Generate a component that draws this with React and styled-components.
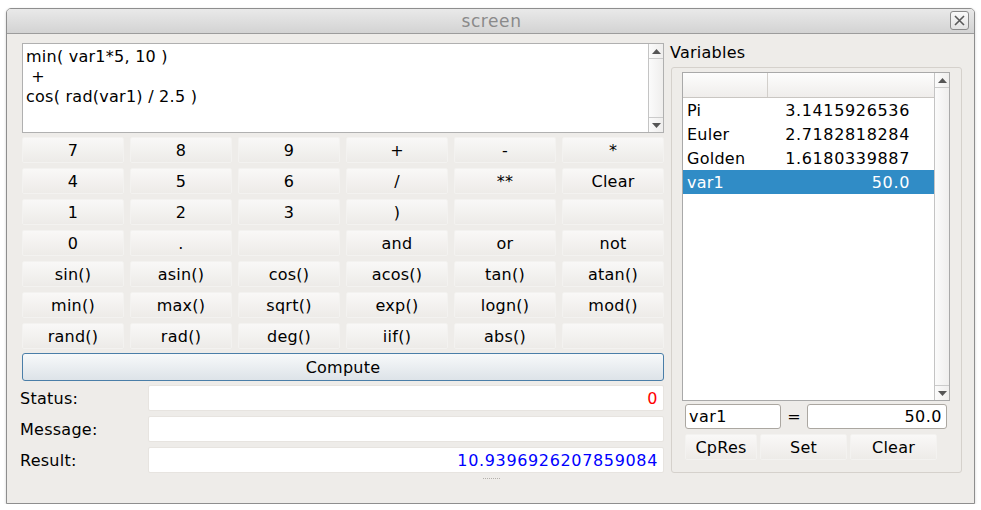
import styled, { createGlobalStyle } from 'styled-components';

const GlobalStyle = createGlobalStyle`
  html, body {
    margin: 0;
    padding: 0;
    background: #ffffff;
  }
  body {
    font-family: 'DejaVu Sans', 'Noto Sans', sans-serif;
    font-size: 16px;
    letter-spacing: 0.25px;
    color: #000000;
  }
`;

const Window = styled.div`
  margin: 8px 0 0 6px;
  width: 967px;
  height: 494px;
  border: 1px solid #8e8e8e;
  border-radius: 5px 5px 0 0;
  background: #eeece9;
  box-shadow: 0 1px 3px rgba(0, 0, 0, 0.18);
  display: flex;
  flex-direction: column;
  overflow: hidden;
`;

const TitleBar = styled.div`
  position: relative;
  height: 24px;
  flex: none;
  border-bottom: 1px solid #9c9c9c;
  background: linear-gradient(#e9e9e9, #d3d3d3);
  display: flex;
  align-items: center;
  justify-content: center;
`;

const Title = styled.span`
  font-size: 17px;
  letter-spacing: 0.6px;
  color: #8a8a8a;
  margin-left: 2px;
`;

const CloseButton = styled.div`
  position: absolute;
  right: 5px;
  top: 2px;
  width: 17px;
  height: 17px;
  border: 1px solid #8a8a8a;
  border-radius: 3px;
  background: linear-gradient(#fafafa, #e2e2e2);
  display: flex;
  align-items: center;
  justify-content: center;
`;

const Client = styled.div`
  flex: 1;
  display: flex;
  flex-direction: column;
  padding: 9px 11px 0 13px;
`;

const Main = styled.div`
  display: flex;
  gap: 6px;
`;

const LeftColumn = styled.div`
  width: 644px;
  display: flex;
  flex-direction: column;
`;

const Editor = styled.div`
  margin-left: 2px;
  height: 88px;
  border: 1px solid #b0b0b0;
  background: #ffffff;
  display: flex;
`;

const EditorText = styled.div`
  flex: 1;
  padding: 3px 3px;
  line-height: 20px;
  white-space: pre;
`;

const ScrollBar = styled.div`
  width: 14px;
  border-left: 1px solid #c4c4c4;
  background: linear-gradient(90deg, #fbfbfb, #efeeed);
  display: flex;
  flex-direction: column;
  justify-content: space-between;
`;

const ArrowBox = styled.div`
  height: 14px;
  display: flex;
  align-items: center;
  justify-content: center;
  border-${(p) => (p.$down ? 'top' : 'bottom')}: 1px solid #cbcbcb;
`;

const Keypad = styled.div`
  margin: 4px 0 0 2px;
  display: grid;
  grid-template-columns: repeat(6, 1fr);
  grid-auto-rows: 26px;
  column-gap: 6px;
  row-gap: 5px;
`;

const Key = styled.div`
  border-radius: 2px;
  border: 1px solid #f3f2f0;
  background: linear-gradient(#f9f8f7, #edebe8);
  display: flex;
  align-items: center;
  justify-content: center;
`;

const ComputeButton = styled.div`
  margin: 4px 0 0 2px;
  height: 26px;
  border: 1px solid #4a7ea8;
  border-radius: 3px;
  background: linear-gradient(#f7f9fa, #dde3e8);
  display: flex;
  align-items: center;
  justify-content: center;
`;

const Form = styled.div`
  margin-top: 4px;
  display: grid;
  grid-template-columns: 128px 1fr;
  grid-auto-rows: 26px;
  row-gap: 5px;
`;

const FormLabel = styled.div`
  display: flex;
  align-items: center;
`;

const FormField = styled.div`
  border: 1px solid #e7e4e0;
  border-radius: 2px;
  background: #ffffff;
  display: flex;
  align-items: center;
  justify-content: flex-end;
  padding-right: 5px;
  color: ${(p) => p.$color || '#000000'};
  letter-spacing: 0.65px;
`;

const RightColumn = styled.div`
  width: 292px;
  display: flex;
  flex-direction: column;
`;

const GroupTitle = styled.div`
  height: 20px;
  line-height: 20px;
`;

const GroupBox = styled.div`
  margin: 4px 0 0 1px;
  border: 1px solid #d5d1cc;
  border-radius: 3px;
  padding: 4px 11px 12px 10px;
  display: flex;
  flex-direction: column;
`;

const Table = styled.div`
  height: 327px;
  border: 1px solid #a9a9a9;
  background: #ffffff;
  display: grid;
  grid-template-columns: 1fr 15px;
`;

const TableBody = styled.div`
  display: flex;
  flex-direction: column;
`;

const Header = styled.div`
  height: 24px;
  border-bottom: 1px solid #c9c6c2;
  background: linear-gradient(#fdfdfd, #efedeb);
  display: grid;
  grid-template-columns: 85px 1fr;
`;

const HeaderCell = styled.div`
  border-right: ${(p) => (p.$divider ? '1px solid #d2cfcb' : 'none')};
`;

const Row = styled.div`
  height: 24px;
  display: grid;
  grid-template-columns: 85px 144px 1fr;
  align-items: center;
  background: ${(p) => (p.$selected ? '#308cc6' : 'transparent')};
  color: ${(p) => (p.$selected ? '#ffffff' : '#000000')};
`;

const NameCell = styled.div`
  padding-left: 4px;
`;

const ValueCell = styled.div`
  text-align: right;
  padding-right: 2px;
  letter-spacing: 0.65px;
`;

const TableScroll = styled(ScrollBar)`
  width: 14px;
`;

const EditRow = styled.div`
  margin: 2px 0 0 3px;
  display: flex;
  align-items: center;
  height: 27px;
`;

const LineEdit = styled.div`
  width: ${(p) => p.$width}px;
  height: 25px;
  border: 1px solid #aba7a1;
  border-radius: 3px;
  background: #ffffff;
  display: flex;
  align-items: center;
  justify-content: ${(p) => (p.$right ? 'flex-end' : 'flex-start')};
  padding: 0 4px 0 3px;
  box-sizing: border-box;
  letter-spacing: 0.5px;
`;

const Equals = styled.div`
  width: 26px;
  text-align: center;
`;

const ButtonRow = styled.div`
  margin: 4px 0 0 3px;
  display: flex;
  gap: 3px;
`;

const PanelButton = styled(Key)`
  width: ${(p) => p.$width}px;
  height: 26px;
  box-sizing: border-box;
`;

const Grip = styled.div`
  align-self: center;
  margin: 5px 0 0 -1px;
  width: 17px;
  border-top: 1px dotted #b3b0ab;
`;

const ArrowIcon = ({ down }) => (
  <svg width="9" height="5" viewBox="0 0 9 5">
    <polygon points={down ? '0,0 9,0 4.5,5' : '0,5 9,5 4.5,0'} fill="#555555" />
  </svg>
);

const keys = [
  '7', '8', '9', '+', '-', '*',
  '4', '5', '6', '/', '**', 'Clear',
  '1', '2', '3', ')', '', '',
  '0', '.', '', 'and', 'or', 'not',
  'sin()', 'asin()', 'cos()', 'acos()', 'tan()', 'atan()',
  'min()', 'max()', 'sqrt()', 'exp()', 'logn()', 'mod()',
  'rand()', 'rad()', 'deg()', 'iif()', 'abs()', '',
];

const variables = [
  { name: 'Pi', value: '3.1415926536' },
  { name: 'Euler', value: '2.7182818284' },
  { name: 'Golden', value: '1.6180339887' },
  { name: 'var1', value: '50.0', selected: true },
];

const App = () => {
  return (
    <>
      <GlobalStyle />
      <Window>
        <TitleBar>
          <Title>screen</Title>
          <CloseButton>
            <svg width="11" height="11" viewBox="0 0 11 11">
              <path d="M1 1 L10 10 M10 1 L1 10" stroke="#5a5a5a" strokeWidth="1.6" />
            </svg>
          </CloseButton>
        </TitleBar>
        <Client>
          <Main>
            <LeftColumn>
              <Editor>
                <EditorText>{'min( var1*5, 10 )\n +\ncos( rad(var1) / 2.5 )'}</EditorText>
                <ScrollBar>
                  <ArrowBox>
                    <ArrowIcon />
                  </ArrowBox>
                  <ArrowBox $down>
                    <ArrowIcon down />
                  </ArrowBox>
                </ScrollBar>
              </Editor>
              <Keypad>
                {keys.map((k, i) => (
                  <Key key={i}>{k}</Key>
                ))}
              </Keypad>
              <ComputeButton>Compute</ComputeButton>
              <Form>
                <FormLabel>Status:</FormLabel>
                <FormField $color="#ff0000">0</FormField>
                <FormLabel>Message:</FormLabel>
                <FormField />
                <FormLabel>Result:</FormLabel>
                <FormField $color="#0000ff">10.9396926207859084</FormField>
              </Form>
            </LeftColumn>
            <RightColumn>
              <GroupTitle>Variables</GroupTitle>
              <GroupBox>
                <Table>
                  <TableBody>
                    <Header>
                      <HeaderCell $divider />
                      <HeaderCell />
                    </Header>
                    {variables.map((v) => (
                      <Row key={v.name} $selected={v.selected}>
                        <NameCell>{v.name}</NameCell>
                        <ValueCell>{v.value}</ValueCell>
                      </Row>
                    ))}
                  </TableBody>
                  <TableScroll>
                    <ArrowBox>
                      <ArrowIcon />
                    </ArrowBox>
                    <ArrowBox $down>
                      <ArrowIcon down />
                    </ArrowBox>
                  </TableScroll>
                </Table>
                <EditRow>
                  <LineEdit $width={96}>var1</LineEdit>
                  <Equals>=</Equals>
                  <LineEdit $width={140} $right>
                    50.0
                  </LineEdit>
                </EditRow>
                <ButtonRow>
                  <PanelButton $width={72}>CpRes</PanelButton>
                  <PanelButton $width={87}>Set</PanelButton>
                  <PanelButton $width={87}>Clear</PanelButton>
                </ButtonRow>
              </GroupBox>
            </RightColumn>
          </Main>
          <Grip />
        </Client>
      </Window>
    </>
  );
};

export default App;
